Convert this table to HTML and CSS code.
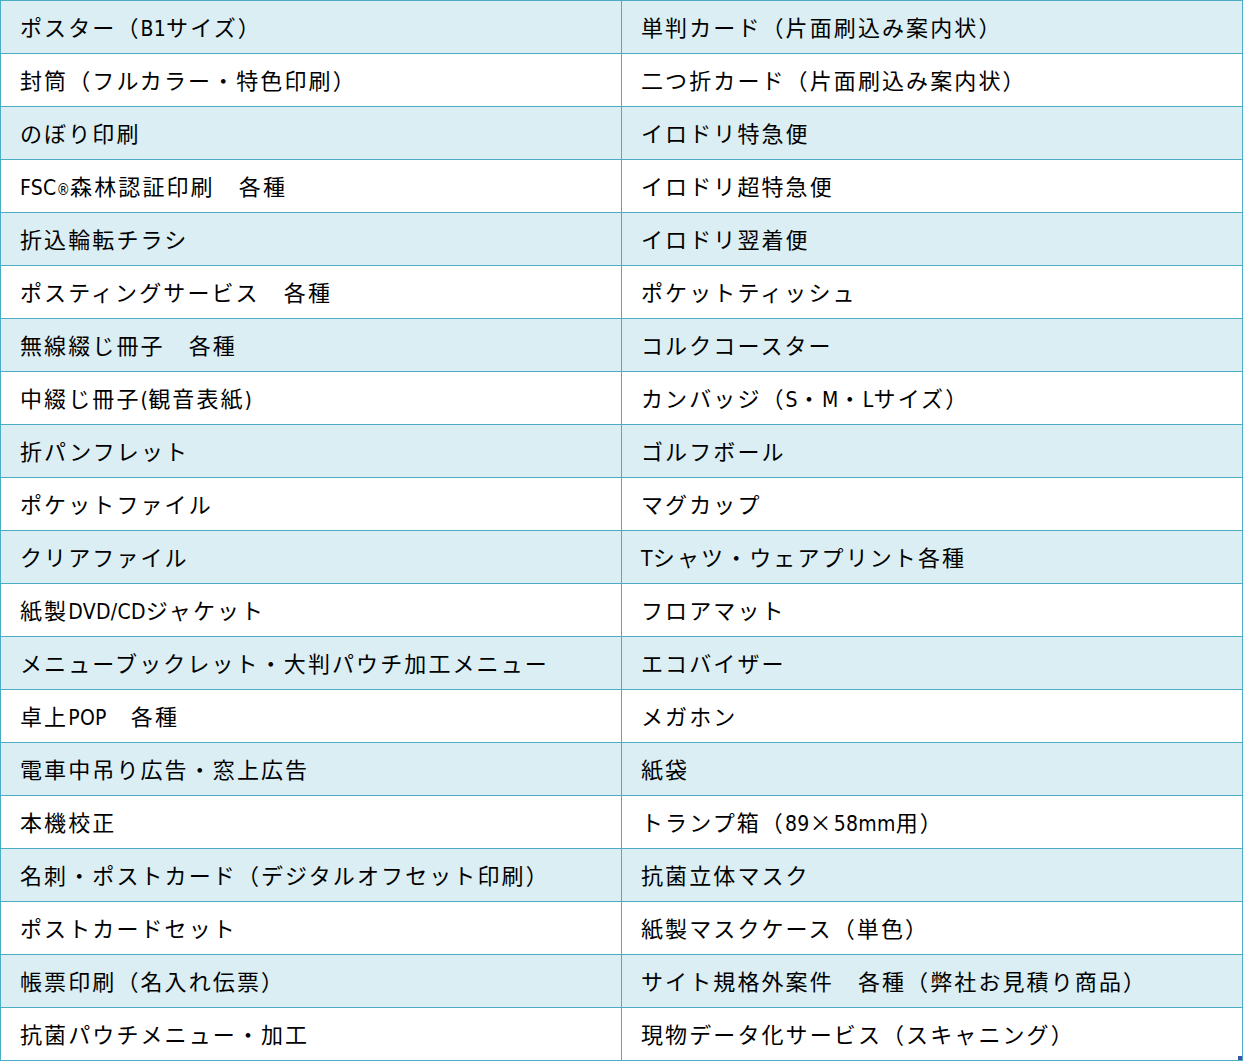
FILE: index.html
```html
<!DOCTYPE html>
<html lang="ja">
<head>
<meta charset="utf-8">
<link rel="stylesheet" href="styles.css">
</head>
<body>
<div class="wrap">
<table class="list">
<tr class="odd"><td>ポスター（<span class="en">B1</span>サイズ）</td><td>単判カード（片面刷込み案内状）</td></tr>
<tr><td>封筒（フルカラー・特色印刷）</td><td>二つ折カード（片面刷込み案内状）</td></tr>
<tr class="odd"><td>のぼり印刷</td><td>イロドリ特急便</td></tr>
<tr><td><span class="en">FSC</span><span class="reg">®</span>森林認証印刷　各種</td><td>イロドリ超特急便</td></tr>
<tr class="odd"><td>折込輪転チラシ</td><td>イロドリ翌着便</td></tr>
<tr><td>ポスティングサービス　各種</td><td>ポケットティッシュ</td></tr>
<tr class="odd"><td>無線綴じ冊子　各種</td><td>コルクコースター</td></tr>
<tr><td>中綴じ冊子<span class="en">(</span>観音表紙<span class="en">)</span></td><td>カンバッジ（<span class="en">S</span>・<span class="en">M</span>・<span class="en">L</span>サイズ）</td></tr>
<tr class="odd"><td>折パンフレット</td><td>ゴルフボール</td></tr>
<tr><td>ポケットファイル</td><td>マグカップ</td></tr>
<tr class="odd"><td>クリアファイル</td><td><span class="en">T</span>シャツ・ウェアプリント各種</td></tr>
<tr><td>紙製<span class="en">DVD/CD</span>ジャケット</td><td>フロアマット</td></tr>
<tr class="odd"><td>メニューブックレット・大判パウチ加工メニュー</td><td>エコバイザー</td></tr>
<tr><td>卓上<span class="en">POP</span>　各種</td><td>メガホン</td></tr>
<tr class="odd"><td>電車中吊り広告・窓上広告</td><td>紙袋</td></tr>
<tr><td>本機校正</td><td>トランプ箱（<span class="en">89</span><span class="x">×</span><span class="en">58mm</span>用）</td></tr>
<tr class="odd"><td>名刺・ポストカード（デジタルオフセット印刷）</td><td>抗菌立体マスク</td></tr>
<tr><td>ポストカードセット</td><td>紙製マスクケース（単色）</td></tr>
<tr class="odd"><td>帳票印刷（名入れ伝票）</td><td>サイト規格外案件　各種（弊社お見積り商品）</td></tr>
<tr><td>抗菌パウチメニュー・加工</td><td>現物データ化サービス（スキャニング）</td></tr>
</table>
<span class="grip"></span>
</div>
</body>
</html>
```
FILE: styles.css
```css
html, body {
  margin: 0;
  padding: 0;
  background: #ffffff;
}
.wrap {
  position: relative;
  width: 1243px;
}
.list {
  border-collapse: collapse;
  width: 1243px;
  table-layout: fixed;
  font-family: "DejaVu Sans Condensed", "Noto Sans CJK JP", sans-serif;
  font-size: 22px;
  letter-spacing: 2.1px;
  color: #000;
}
.list tr {
  height: 53px;
}
.list td {
  border: 1px solid #4bacc6;
  padding: 0 0 2px 19px;
  white-space: nowrap;
  vertical-align: middle;
  overflow: hidden;
}
.list td:first-child {
  box-sizing: border-box;
  width: 621px;
}
.list tr.odd td {
  background: #daeef3;
}
.en {
  letter-spacing: 0.3px;
  font-size: 21px;
}
.reg {
  font-size: 15px;
  letter-spacing: 0;
}
.x {
  font-family: "Noto Sans CJK JP", sans-serif;
}
.grip {
  position: absolute;
  right: 1px;
  bottom: 1px;
  width: 4px;
  height: 4px;
  background: #3d55a6;
}
```
